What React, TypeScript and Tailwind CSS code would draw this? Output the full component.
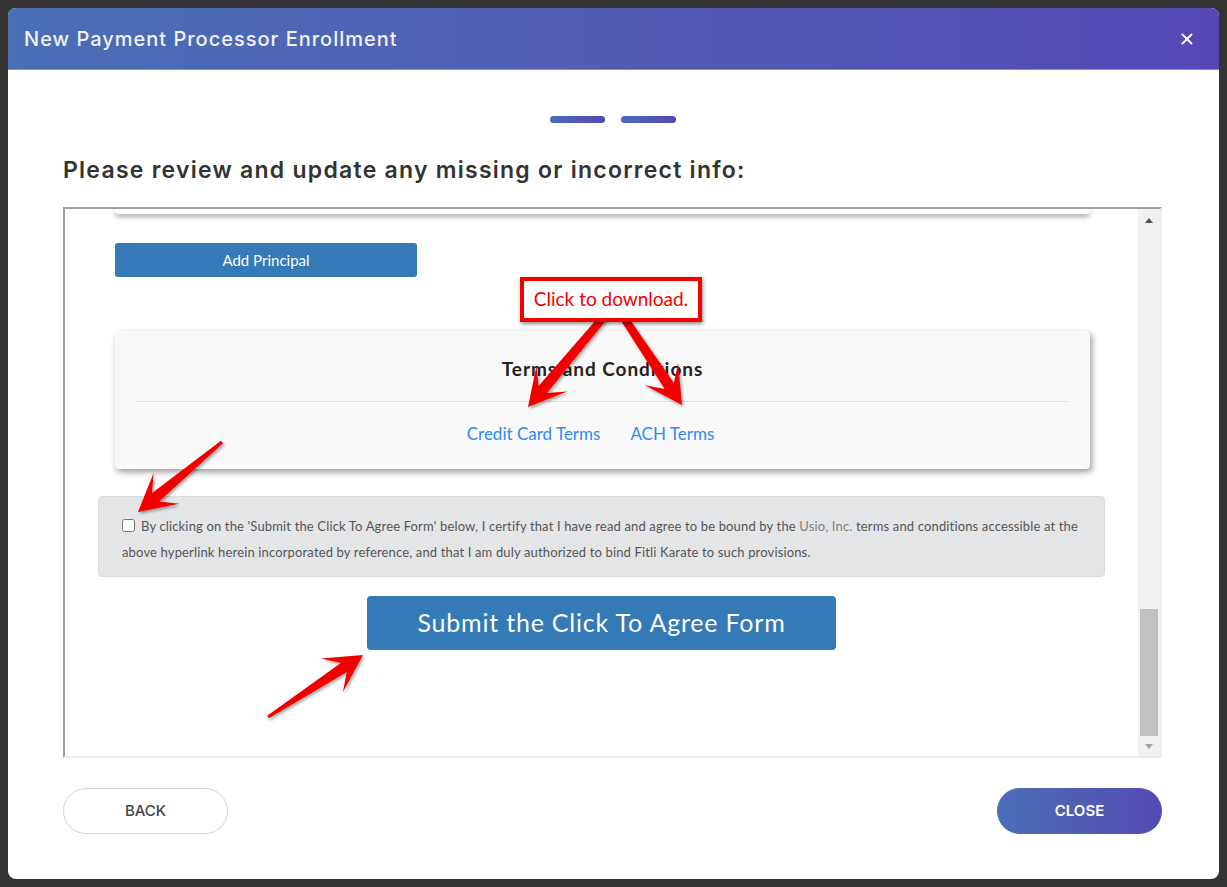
import { X } from "lucide-react";

type Pt = [number, number];

// tapered red annotation arrow, thin tail to swept head
const arrowPoints = (from: Pt, to: Pt, tailW = 3, neckW = 11, headW = 40, headLen = 37) => {
  const [x1, y1] = from;
  const [x2, y2] = to;
  const len = Math.hypot(x2 - x1, y2 - y1);
  const ux = (x2 - x1) / len;
  const uy = (y2 - y1) / len;
  const nx = -uy;
  const ny = ux;
  const nk = headLen * 0.62;
  const p = (bx: number, by: number, w: number, s: number): string =>
    `${(bx + nx * w * s).toFixed(1)},${(by + ny * w * s).toFixed(1)}`;
  const neckX = x2 - ux * nk;
  const neckY = y2 - uy * nk;
  const barbX = x2 - ux * headLen;
  const barbY = y2 - uy * headLen;
  return [
    p(x1, y1, tailW / 2, 1),
    p(neckX, neckY, neckW / 2, 1),
    p(barbX, barbY, headW / 2, 1),
    `${x2},${y2}`,
    p(barbX, barbY, headW / 2, -1),
    p(neckX, neckY, neckW / 2, -1),
    p(x1, y1, tailW / 2, -1),
  ].join(" ");
};

const Annotations = () => (
  <svg className="pointer-events-none absolute inset-0" width="1227" height="887" viewBox="0 0 1227 887">
    <defs>
      <filter id="arrowShadow" x="-20%" y="-20%" width="140%" height="140%">
        <feDropShadow dx="1.5" dy="2" stdDeviation="1.5" floodColor="#000" floodOpacity="0.35" />
      </filter>
    </defs>
    <g fill="#f20000" filter="url(#arrowShadow)">
      <polygon points={arrowPoints([618, 300], [528, 407], 7, 11)} />
      <polygon points={arrowPoints([612, 300], [682, 405], 7, 11)} />
      <polygon points={arrowPoints([222, 442], [138, 512])} />
      <polygon points={arrowPoints([268, 717], [363, 655])} />
    </g>
  </svg>
);

export default function App() {
  return (
    <div className="relative h-[887px] w-full bg-[#333333] p-2">
      <div className="flex h-full flex-col overflow-hidden rounded-lg bg-white">
        <header className="flex h-[62px] shrink-0 items-center justify-between border-b border-[#8f88d6] bg-linear-to-r from-[#4a6fb5] to-[#5548b4] pl-4 pr-[23px]">
          <h1 className="font-['Inter',sans-serif] text-[20px] font-medium tracking-[1px] text-[#f2f2fa]">
            New Payment Processor Enrollment
          </h1>
          <X size={18} strokeWidth={2.6} className="text-white" />
        </header>

        <div className="flex flex-1 flex-col pl-[55px] pr-[57px] font-['Inter',sans-serif]">
          <div className="mt-[46px] flex justify-center gap-4">
            <span className="h-[7px] w-[55px] rounded-full bg-linear-to-r from-[#4a6cb6] to-[#5446b3]" />
            <span className="h-[7px] w-[55px] rounded-full bg-linear-to-r from-[#4a6cb6] to-[#5446b3]" />
          </div>

          <h2 className="mt-[32px] text-[23px] font-semibold leading-[30px] tracking-[1.25px] text-[#333]">
            Please review and update any missing or incorrect info:
          </h2>

          <div className="mt-[22px] flex h-[551px] border-2 border-b-[#ececec] border-l-[#a0a0a0] border-r-[#ececec] border-t-[#a0a0a0] font-['Lato',sans-serif]">
            <div className="flex flex-1 flex-col overflow-hidden">
              <div className="ml-[50px] mr-[48px] h-[5px] shrink-0 rounded-b bg-white shadow-[0_3px_5px_rgba(0,0,0,0.35)]" />

              <button className="ml-[50px] mt-[29px] h-[34px] w-[302px] shrink-0 rounded-[3px] bg-[#337ab7] text-[15px] text-white">
                Add Principal
              </button>

              <div className="ml-[50px] mr-[48px] mt-[54px] flex h-[138px] shrink-0 flex-col items-center rounded-sm bg-[#f9f9f9] px-[22px] shadow-[2px_3px_6px_rgba(0,0,0,0.4)]">
                <h3 className="mt-[26px] text-[19px] font-bold leading-6 tracking-[0.95px] text-[#222]">
                  Terms and Conditions
                </h3>
                <hr className="mt-[20px] w-full border-[#e2e2e2]" />
                <div className="mt-[21px] flex gap-[30px] pr-[24px] text-[17px] leading-[22px] text-[#2e8cf0]">
                  <a>Credit Card Terms</a>
                  <a>ACH Terms</a>
                </div>
              </div>

              <div className="mx-[33px] mt-[27px] h-[81px] shrink-0 rounded border border-[#dadbdd] bg-[#e4e5e7] px-[23px] pt-[16px] text-[13px] leading-[26px] tracking-[0.15px] text-[#555]">
                <input type="checkbox" className="mr-[6px] h-[13px] w-[13px] align-[-1px]" />
                By clicking on the 'Submit the Click To Agree Form' below, I certify that I have read and agree to be
                bound by the <span className="text-[#808080]">Usio, Inc.</span> terms and conditions accessible at the
                above hyperlink herein incorporated by reference, and that I am duly authorized to bind Fitli Karate to
                such provisions.
              </div>

              <button className="mx-auto mt-[19px] h-[54px] w-[469px] shrink-0 rounded bg-[#337ab7] text-[25px] tracking-[0.8px] text-white">
                Submit the Click To Agree Form
              </button>
            </div>

            <div className="flex w-[22px] shrink-0 flex-col bg-[#f1f1f1]">
              <div className="flex h-[22px] items-center justify-center">
                <span className="h-0 w-0 border-x-[4px] border-b-[5px] border-x-transparent border-b-[#505050]" />
              </div>
              <div className="flex-1" />
              <div className="mx-[2px] h-[127px] bg-[#c1c1c1]" />
              <div className="flex h-[20px] items-center justify-center">
                <span className="h-0 w-0 border-x-[4px] border-t-[5px] border-x-transparent border-t-[#a3a3a3]" />
              </div>
            </div>
          </div>

          <div className="mt-[30px] flex justify-between">
            <button className="h-[46px] w-[165px] rounded-full border border-[#d6d6d6] bg-white text-[15px] font-medium text-[#444]">
              BACK
            </button>
            <button className="h-[46px] w-[165px] rounded-full bg-linear-to-r from-[#4a6fb5] to-[#5548b4] text-[15px] font-semibold text-white">
              CLOSE
            </button>
          </div>
        </div>
      </div>

      <Annotations />

      <div className="absolute left-[520px] top-[277px] flex h-[45px] w-[182px] items-center justify-center border-[4px] border-[#f20000] bg-white font-['Lato',sans-serif] text-[19px] text-[#f20000] shadow-[1px_2px_4px_rgba(0,0,0,0.45)]">
        Click to download.
      </div>
    </div>
  );
}
